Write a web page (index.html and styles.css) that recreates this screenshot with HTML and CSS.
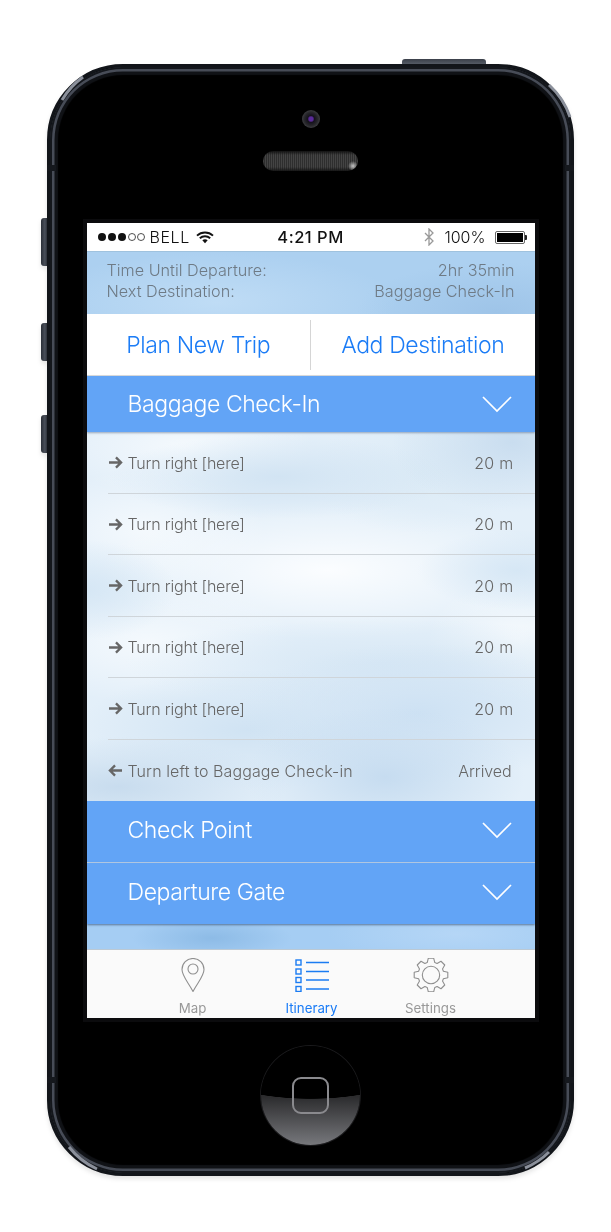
FILE: index.html
```html
<!DOCTYPE html>
<html lang="en">
<head>
<meta charset="utf-8">
<title>Itinerary</title>
<link rel="stylesheet" href="styles.css">
</head>
<body>
<div class="phone">
  <span class="hw hw-top"></span>
  <span class="hw hw-mute"></span>
  <span class="hw hw-vol1"></span>
  <span class="hw hw-vol2"></span>
  <div class="body">
    <div class="bezel-top">
      <span class="camera"></span>
      <span class="speaker"></span>
    </div>
    <main class="screen">
      <div class="status">
        <div class="st-left">
          <svg class="dots" viewBox="0 0 48 10" width="48" height="10"><circle cx="5" cy="5" r="4"/><circle cx="15" cy="5" r="4"/><circle cx="25" cy="5" r="4"/><circle cx="35" cy="5" r="3.5" fill="none" stroke="#222" stroke-width=".8"/><circle cx="44" cy="5" r="3.5" fill="none" stroke="#222" stroke-width=".8"/></svg>
          <span class="carrier">BELL</span>
          <svg class="wifi" viewBox="0 0 18 13" width="18" height="13"><path d="M1 4.6C5.5 .4 12.500 .4 17 4.600M3.800 7.200C6.800 4.500 11.200 4.500 14.200 7.200" fill="none" stroke="#111" stroke-width="1.900"/><path d="M6.300 9.300C8 8 10 8 11.700 9.300L9 12.300Z" fill="#111"/></svg>
        </div>
        <div class="st-time">4:21 PM</div>
        <div class="st-right">
          <svg class="bt" viewBox="0 0 10 18" width="10" height="18"><path d="M1 5l8 8-4 4V1l4 4-8 8" fill="none" stroke="#999" stroke-width="1.300"/></svg>
          <span>100%</span>
          <span class="battery"><span class="battery-fill"></span></span>
        </div>
      </div>
      <section class="info">
        <div class="info-row"><span>Time Until Departure:</span><span>2hr 35min</span></div>
        <div class="info-row"><span>Next Destination:</span><span>Baggage Check-In</span></div>
      </section>
      <nav class="actions">
        <a class="action action-plan">Plan New Trip</a>
        <a class="action action-add">Add Destination</a>
      </nav>
      <header class="group group-open">
        <span>Baggage Check-In</span>
        <svg class="chev" viewBox="0 0 30 17" width="30" height="17"><path d="M1 1l14 14L29 1"/></svg>
      </header>
      <section class="steps">
        <div class="step"><div class="step-in"><span class="step-main"><svg class="arrow" viewBox="0 0 16 14" width="15" height="13"><path d="M1 7h13M8.500 1.500L14 7l-5.500 5.500"/></svg>Turn right [here]</span><span class="dist">20 m</span></div></div>
        <div class="step"><div class="step-in"><span class="step-main"><svg class="arrow" viewBox="0 0 16 14" width="15" height="13"><path d="M1 7h13M8.500 1.500L14 7l-5.500 5.500"/></svg>Turn right [here]</span><span class="dist">20 m</span></div></div>
        <div class="step"><div class="step-in"><span class="step-main"><svg class="arrow" viewBox="0 0 16 14" width="15" height="13"><path d="M1 7h13M8.500 1.500L14 7l-5.500 5.500"/></svg>Turn right [here]</span><span class="dist">20 m</span></div></div>
        <div class="step"><div class="step-in"><span class="step-main"><svg class="arrow" viewBox="0 0 16 14" width="15" height="13"><path d="M1 7h13M8.500 1.500L14 7l-5.500 5.500"/></svg>Turn right [here]</span><span class="dist">20 m</span></div></div>
        <div class="step"><div class="step-in"><span class="step-main"><svg class="arrow" viewBox="0 0 16 14" width="15" height="13"><path d="M1 7h13M8.500 1.500L14 7l-5.500 5.500"/></svg>Turn right [here]</span><span class="dist">20 m</span></div></div>
        <div class="step"><div class="step-in step-last"><span class="step-main"><svg class="arrow" viewBox="0 0 16 14" width="15" height="13"><path d="M15 7H2M7.500 1.500L2 7l5.500 5.500"/></svg>Turn left to Baggage Check-in</span><span class="dist dist-last">Arrived</span></div></div>
      </section>
      <header class="group">
        <span>Check Point</span>
        <svg class="chev" viewBox="0 0 30 17" width="30" height="17"><path d="M1 1l14 14L29 1"/></svg>
      </header>
      <header class="group group-last">
        <span>Departure Gate</span>
        <svg class="chev" viewBox="0 0 30 17" width="30" height="17"><path d="M1 1l14 14L29 1"/></svg>
      </header>
      <div class="sky-strip"></div>
      <footer class="tabs">
        <div class="tab">
          <svg viewBox="0 0 24 34" width="24" height="34"><path d="M12 33.500C8 25.500 1 18 1 11.500a11 11 0 0 1 22 0C23 18 16 25.500 12 33.500Z" fill="none" stroke="#8f8f8f" stroke-width="1.100"/><circle cx="12" cy="11" r="5" fill="none" stroke="#8f8f8f" stroke-width="1.100"/></svg>
          <span>Map</span>
        </div>
        <div class="tab tab-on">
          <svg viewBox="0 0 34 34" width="34" height="34"><g fill="none" stroke="#1b7cf2" stroke-width="1.400"><rect x="1" y="2" width="5" height="5"/><rect x="1" y="11" width="5" height="5"/><rect x="1" y="19.500" width="5" height="5"/><rect x="1" y="28.500" width="5" height="5"/><path d="M11 4.500h23M11 13.500h23M11 22h23M11 31h23"/></g></svg>
          <span>Itinerary</span>
        </div>
        <div class="tab">
          <svg viewBox="-18 -17 36 34" width="36" height="34"><g fill="none" stroke="#8f8f8f" stroke-width="1.100" stroke-linejoin="round"><circle r="8.700"/><path d="M-3.800-12.400L-2.660-16.800H2.660L3.800-12.400L6.100-11.500L10-13.750L13.750-10L11.500-6.100L12.400-3.800L16.800-2.660V2.660L12.400 3.800L11.500 6.100L13.750 10L10 13.750L6.100 11.500L3.800 12.400L2.660 16.800H-2.660L-3.800 12.400L-6.100 11.500L-10 13.750L-13.750 10L-11.500 6.100L-12.400 3.800L-16.800 2.660V-2.660L-12.400-3.800L-11.500-6.100L-13.750-10L-10-13.750L-6.100-11.500Z"/></g></svg>
          <span>Settings</span>
        </div>
      </footer>
    </main>
    <div class="bezel-bottom">
      <div class="home"><span class="home-square"></span></div>
    </div>
  </div>
  <svg class="chamfer" viewBox="0 0 527 1112" width="527" height="1112">
    <g class="chamfer-lit">
      <path d="M15 36A76 76 0 0 1 36 13"/>
      <path d="M502 21A76 76 0 0 1 523 53"/>
      <path d="M22 1083A76 76 0 0 0 50 1105"/>
      <path d="M502 1088A76 76 0 0 1 478 1104"/>
    </g>
    <g class="chamfer-gap">
      <path d="M0 104h9M518 104h9M0 1016h9M518 1016h9"/>
    </g>
  </svg>
</div>
</body>
</html>
```
FILE: styles.css
```css
* { box-sizing: border-box; }
html, body { margin: 0; padding: 0; background: #fff; }
body {
  width: 611px;
  height: 1232px;
  overflow: hidden;
  padding: 64px 0 0 47px;
  font-family: "Inter", "Liberation Sans", sans-serif;
  font-weight: 300;
}
.phone {
  position: relative;
  width: 527px;
  height: 1112px;
  filter: drop-shadow(0 3px 2px rgba(0,0,0,.1));
}
.hw {
  position: absolute;
  background: linear-gradient(90deg, #2a2f38, #4a505b 55%, #20242b);
}
.hw-top { left: 355px; top: -5px; width: 84px; height: 6px; border-radius: 3px 3px 0 0; background: linear-gradient(#3a3f49, #5a606b); }
.hw-mute { left: -6px; top: 154px; width: 7px; height: 48px; border-radius: 3px 0 0 3px; }
.hw-vol1 { left: -6px; top: 259px; width: 7px; height: 38px; border-radius: 3px 0 0 3px; }
.hw-vol2 { left: -6px; top: 351px; width: 7px; height: 38px; border-radius: 3px 0 0 3px; }
.chamfer { position: absolute; left: 0; top: 0; pointer-events: none; }
.chamfer-lit { fill: none; stroke: #8b909b; stroke-width: 3; }
.chamfer-gap { fill: none; stroke: #15181d; stroke-width: 6; }
.body {
  position: relative;
  height: 100%;
  background: #000;
  border-radius: 76px;
  border: 3px solid #12151a;
  box-shadow:
    inset 0 0 0 2px #14171c,
    inset 0 0 0 4.500px #474c57,
    inset 0 0 1px 8px #101216;
  padding: 0 37px;
  display: flex;
  flex-direction: column;
  align-items: center;
}
.bezel-top {
  height: 156px;
  flex: none;
  display: flex;
  flex-direction: column;
  align-items: center;
  padding-top: 43px;
  gap: 23px;
}
.camera {
  width: 18px; height: 18px; border-radius: 50%;
  background: radial-gradient(circle, #5a2a9a 0 2px, #15121c 3.500px, #26262a 6.500px, #3c3c40 9px);
}
.speaker {
  width: 95px; height: 20px; border-radius: 10px;
  background:
    radial-gradient(circle 5px at 90px 15px, #c4c4c4, transparent),
    linear-gradient(#121212, transparent 20%, transparent 80%, #161616),
    repeating-linear-gradient(90deg, #444 0 1px, #2e2e2e 1px 2px);
}
.screen {
  flex: none;
  width: 448px;
  height: 795px;
  display: flex;
  flex-direction: column;
  background: #fff;
  box-shadow: 0 0 0 4px #0b0b0d;
  overflow: hidden;
}
.status {
  flex: none;
  height: 28px;
  background: #fff;
  color: #111;
  font-size: 16px;
  font-weight: 300;
  display: grid;
  grid-template-columns: 1fr auto 1fr;
  align-items: center;
  padding: 0 10px;
}
.st-left { display: flex; align-items: center; gap: 5px; }
.carrier { letter-spacing: .6px; }
.dots { fill: #111; }
.wifi { margin-left: 1px; }
.st-time { font-weight: 500; font-size: 16.500px; letter-spacing: .5px; }
.st-right { display: flex; align-items: center; justify-content: flex-end; gap: 9px; }
.bt { margin-right: 1px; }
.battery {
  width: 30px; height: 13px; border: 1px solid #666; border-radius: 2px;
  padding: 1px; position: relative;
}
.battery::after { content: ""; position: absolute; right: -3.500px; top: 3px; width: 2px; height: 5px; background: #222; border-radius: 0 1px 1px 0; }
.battery-fill { display: block; height: 100%; background: #000; }
.info {
  flex: none;
  height: 63px;
  padding: 8px 20px 0;
  background:
    radial-gradient(ellipse 180px 50px at 130px 50px, #bfdcf5, transparent),
    radial-gradient(ellipse 140px 50px at 410px 60px, #9ec4e8, transparent),
    #acd0f0;
  border-top: 1px solid #9fc2de;
  color: #6e7a85;
  font-size: 16.200px;
  line-height: 21px;
}
.info-row { display: flex; justify-content: space-between; }
.actions {
  flex: none;
  height: 62px;
  display: flex;
  align-items: center;
  background: #fff;
  color: #1b7cf6;
  font-size: 23px;
  letter-spacing: -.4px;
  border-bottom: 1px solid #ddd;
}
.action { flex: 1; text-align: center; height: 50px; line-height: 50px; }
.action-add { border-left: 1px solid #d5d5d5; }
.group {
  flex: none;
  height: 61.500px;
  background: #62a4f6;
  color: #fff;
  font-size: 23px;
  letter-spacing: -.4px;
  display: flex;
  align-items: center;
  justify-content: space-between;
  padding: 0 23px 2px 41px;
  border-bottom: 1px solid #b7cde6;
}
.group-open { height: 56px; padding-bottom: 0; border-bottom: 0; box-shadow: 0 1px 2px rgba(70,90,120,.5); z-index: 1; }
.group-last { border-bottom: 0; box-shadow: 0 1px 2px rgba(40,60,90,.6); z-index: 1; }
.chev { fill: none; stroke: #fff; stroke-width: 1.700; }
.steps {
  flex: none;
  height: 369px;
  background:
    radial-gradient(ellipse 120px 70px at 425px 10px, #c9ddef, transparent),
    radial-gradient(ellipse 170px 42px at 192px 45px, #d2e4f3, transparent),
    radial-gradient(ellipse 110px 60px at 332px 42px, #dcebf6, transparent),
    radial-gradient(ellipse 100px 40px at 430px 138px, #d6e7f5, transparent),
    radial-gradient(ellipse 90px 50px at 0 158px, #d6e7f5, transparent),
    radial-gradient(ellipse 140px 70px at 298px 345px, #c6dcf0, transparent),
    radial-gradient(ellipse 170px 50px at 31px 355px, #c8dcee, transparent),
    radial-gradient(ellipse 180px 70px at 331px 281px, #cde1f3, transparent),
    radial-gradient(ellipse 170px 60px at 160px 298px, #d0e3f3, transparent),
    radial-gradient(ellipse 260px 45px at 298px 232px, #d8e8f5, transparent),
    radial-gradient(ellipse 230px 70px at 241px 138px, #fbfdff, transparent),
    radial-gradient(ellipse 120px 60px at 58px 98px, #f4f9fd, transparent),
    radial-gradient(ellipse 130px 50px at 98px 15px, #f4f9fd, transparent),
    radial-gradient(ellipse 90px 60px at 431px 208px, #f6fafd, transparent),
    radial-gradient(ellipse 150px 60px at 60px 210px, #f4f9fd, transparent),
    #e3eff9;
  color: #666;
  font-size: 16px;
  letter-spacing: -.2px;
}
.step { height: 61.500px; padding-left: 21px; }
.step-in {
  height: 100%;
  display: flex;
  align-items: center;
  justify-content: space-between;
  padding: 1px 21px 0 0;
  border-bottom: 1px solid #cfd5da;
}
.step-last { border-bottom: 0; letter-spacing: .1px; }
.step-main { display: flex; align-items: center; gap: 5px; }
.dist { letter-spacing: .3px; }
.dist-last { margin-right: 2px; letter-spacing: -.1px; }
.arrow { fill: none; stroke: #666; stroke-width: 2.500; }
.sky-strip {
  flex: 1;
  background:
    radial-gradient(ellipse 80px 22px at 125px 14px, #8dbbe6, transparent),
    radial-gradient(ellipse 130px 30px at 370px 10px, #b5d6f6, transparent),
    #a5cdf3;
}
.tabs {
  flex: none;
  height: 69px;
  display: grid;
  grid-template-columns: 119px 119px 119px;
  padding: 8px 0 0 46.500px;
  background: #fafafa;
  border-top: 1px solid #bcc9d4;
  color: #989898;
  font-size: 13.300px;
  font-weight: 400;
}
.tab { display: flex; flex-direction: column; align-items: center; justify-content: flex-start; gap: 8px; line-height: 17px; }
.tab-on { color: #1b7cf6; }
.bezel-bottom { flex: 1; align-self: stretch; display: flex; justify-content: center; padding-top: 28px; }
.home {
  width: 99px; height: 99px; border-radius: 50%;
  background:
    radial-gradient(ellipse 130px 53px at 50% 0, #000 99%, transparent 100%),
    linear-gradient(#2a2a2c 50%, #77787c 100%);
  box-shadow: 0 0 0 1px #1a1a1c;
  display: flex; align-items: center; justify-content: center;
}
.home-square {
  width: 37px; height: 37px; border-radius: 9px;
  border: 2.500px solid #8a8a8e;
}
```
